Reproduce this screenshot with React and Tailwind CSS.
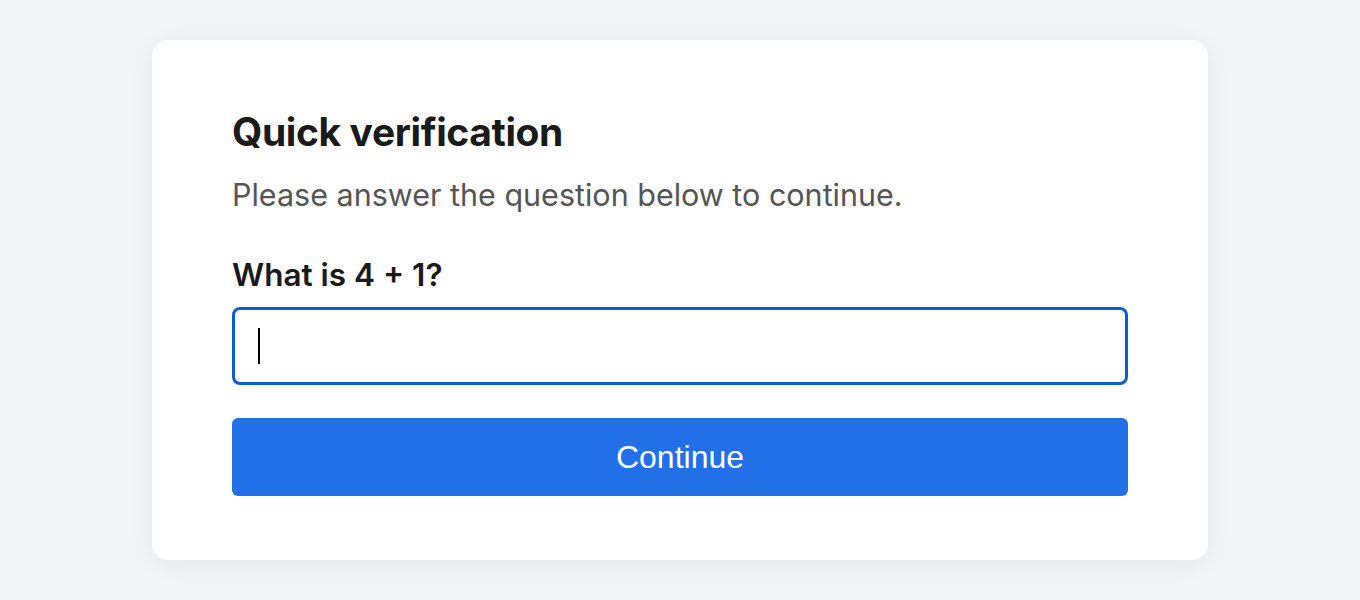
import { useState } from 'react';

export default function App() {
  const [answer, setAnswer] = useState('');

  return (
    <div className="min-h-screen bg-[#f3f4f6] pt-10 font-['Inter','Noto_Sans',sans-serif]">
      <div className="mx-auto w-[1056px] rounded-2xl bg-white px-20 pt-[68px] pb-16 shadow-[0_4px_24px_rgba(0,0,0,0.06)]">
        <h1 className="text-[39px] font-bold leading-[48px] tracking-[-0.01em] text-[#1a1a1a]">Quick verification</h1>
        <p className="mt-[19px] text-[30.5px] leading-10 text-[#555555]">
          Please answer the question below to continue.
        </p>

        <label htmlFor="answer" className="mt-10 block text-[31.5px] font-semibold leading-10 text-[#1a1a1a]">
          What is 4 + 1?
        </label>
        <div className="relative mt-3">
          <input
            id="answer"
            autoFocus
            value={answer}
            onChange={(e) => setAnswer(e.target.value)}
            className="block h-[78px] w-full rounded-lg border-[3px] border-[#0a5fd0] px-[23px] text-[30px] text-black caret-black outline-none"
          />
          {/* caret drawn for the static shot */}
          {answer === '' && (
            <span className="pointer-events-none absolute left-[26px] top-[21px] h-9 w-[2px] bg-black" />
          )}
        </div>

        <button className="mt-[33px] h-[78px] w-full rounded-md bg-[#2170e8] font-['Liberation_Sans',Arial,sans-serif] text-[32px] text-white">
          Continue
        </button>
      </div>
    </div>
  );
}
